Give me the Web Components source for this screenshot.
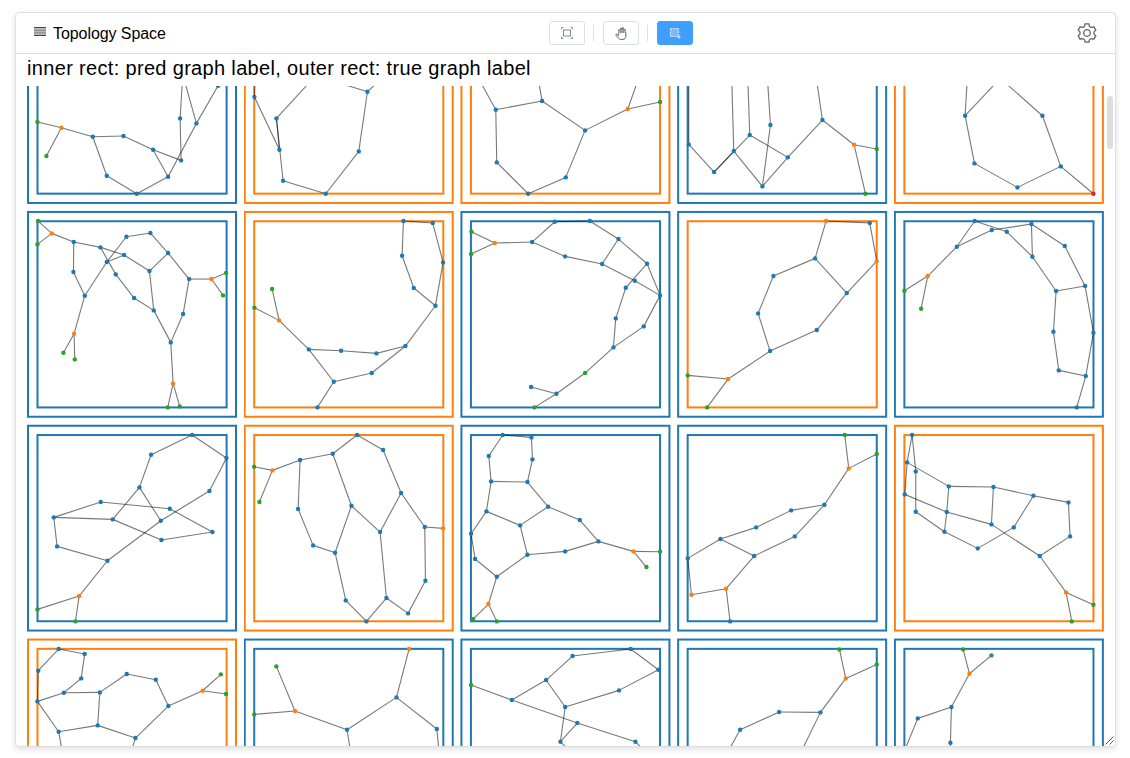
<!DOCTYPE html>
<html lang="en">
<head>
<meta charset="utf-8">
<title>Topology Space</title>
<style>
html,body{margin:0;height:100%;background:#fff;overflow:hidden}
body{font-family:"Liberation Sans",Arial,sans-serif;color:#000}
</style>
</head>
<body>
<topology-panel>
  <span slot="title">Topology Space</span>
  <tool-bar slot="tools"></tool-bar>
  <gear-icon slot="settings"></gear-icon>
  <span slot="caption">inner rect: pred graph label, outer rect: true graph label</span>
  <graph-grid></graph-grid>
</topology-panel>
<script>
const BLUE = '#1f77b4', ORANGE = '#ff7f0e', GREEN = '#2ca02c', RED = '#d62728';
const COLORS = { b: BLUE, o: ORANGE, g: GREEN, r: RED };

// Each graph: true label, predicted label, origin, unit scale, nodes, edges.
// A node is "x,y" with an optional colour letter; "x" marks an unpainted one.
const T = 1 / 3, U = [680 / 1568, 1 / 3];
const GRAPHS = [
 ['b','b',[14,84],[T,T],'70,114g 142,131o 97,216g 236,158 328,156 417,197 501,229 278,275 368,329 462,278 498,103 547,118 612,5 506,-28x','0-1 1-2 1-3 3-4 4-5 5-6 5-9 3-7 7-8 8-9 6-10 10-13 13-11 9-11 11-12'],
 ['o','o',[14,84],[T,T],'721,39 787,103 796,197 807,290 935,329 1034,202 1060,23 723,-40x 920,-42x 960,-8x 1100,-14x','0-7 0-2 1-2 1-3 1-8 3-4 4-5 5-6 6-9 6-10'],
 ['o','o',[454,84],[T,T],'125,77 264,51 393,139 521,75o 618,54g 335,280 222,329 128,235 60,-41x 250,-30x 560,-35x','0-1 1-2 2-3 3-4 2-5 5-6 6-7 7-0 0-8 1-9 3-10'],
 ['b','b',[454,84],[T,T],'704,181 780,264 839,201 887,153 949,123 925,307 1001,220 1105,108 1200,182o 1268,195g 1234,329g 704,-50x 832,-50x 880,-50x 938,-50x 1082,-50x','0-11 0-1 1-2 1-3 2-5 2-12 3-13 3-6 4-5 4-14 5-6 6-7 7-15 7-8 8-9 8-10'],
 ['o','o',[784,84],[T,T],'543,95 571,238 700,310 830,247 775,95 928,329r 551,-40x 670,-40x 620,-42x','0-6 0-7 4-8 0-1 1-2 2-3 3-4 3-5'],
 ['b','b',[20,205],[T,T],'54,48g 95,85o 52,118g 161,111 160,201 194,272 162,386o 130,443g 164,463g 241,127 312,150 260,171 287,208 342,279 401,316 388,198 319,95 391,84 444,144 507,222 574,222o 618,204g 609,271g 489,327 452,412 459,535o 443,607g 479,604g','0-1 1-2 1-3 3-4 4-5 5-6 6-7 6-8 3-9 9-10 10-11 5-11 11-16 9-12 12-13 13-14 14-15 10-15 15-18 16-17 17-18 18-19 19-20 20-21 20-22 19-23 23-24 14-24 24-25 25-26 25-27'],
 ['o','o',[20,205],[T,T],'703,308g 777,346o 756,252g 866,433 963,437 1069,445 1156,423 1055,504 941,530 892,607 1246,302 1181,249 1146,152 1150,48 1238,54 1269,172','0-1 1-2 1-3 3-4 4-5 5-6 6-7 7-8 3-8 8-9 6-10 10-11 11-12 12-13 13-14 14-15 15-10'],
 ['b','b',[454,205],[T,T],'52,80g 122,114o 51,147g 234,111 302,50 407,48 493,102 444,177 333,154 579,176 542,227 515,248 618,271 485,340 569,364 478,427 393,504g 307,566 231,546 241,607g','0-1 1-2 1-3 3-4 4-5 5-6 6-7 7-8 8-3 6-9 9-11 9-12 7-10 10-12 11-13 13-15 12-14 14-15 15-16 16-17 17-18 17-19'],
 ['b','o',[674,205],[T,T],'41,511g 162,522o 99,607g 288,438 252,325 298,213 423,160 456,48o 587,54 608,168o 518,264 428,375','0-1 1-2 1-3 3-4 4-5 5-6 6-7 7-8 8-9 9-10 6-10 10-11 11-3'],
 ['b','b',[674,205],[T,T],'691,257g 761,213o 741,311g 848,125 902,48 998,80 953,75 1072,57 1075,155 1172,123 1233,243 1146,258 1138,380 1154,496 1235,513 1258,383 1208,607','0-1 1-2 1-3 3-4 4-5 3-6 6-7 5-8 7-8 7-9 9-10 10-11 8-11 11-12 12-13 13-14 14-15 15-10 14-16'],
 ['b','b',[20,420],[T,T],'516,45 393,104 358,202 619,114 568,213 422,302 278,298 242,246 101,292 449,266 577,336 424,360 111,379 262,422 177,528o 52,568g 166,604g','0-1 1-2 0-3 3-4 4-5 2-5 2-6 6-8 7-8 7-9 9-10 10-11 11-6 8-12 12-13 5-13 13-14 14-15 14-16'],
 ['o','o',[20,420],[T,T],'702,140g 757,151o 718,246g 840,120 938,101 1011,45 1089,90 1143,219 1080,336 994,257 834,267 879,376 945,398 977,541 1039,604 1099,534 1164,580 1216,482 1214,321 1269,325o','0-1 1-2 1-3 3-4 4-5 5-6 6-7 7-8 8-9 4-9 3-10 10-11 11-12 9-12 12-13 13-14 14-15 8-15 15-16 16-17 17-18 7-18 18-19'],
 ['b','b',[454,420],[T,T],'146,45 232,52 104,108 235,118 111,184 220,186 97,274 198,316 282,260 377,300 433,364 333,394 220,404 51,341 63,417 128,470 103,552o 57,597g 128,604g 538,394o 618,395g 577,441g','0-1 0-2 1-3 2-4 4-5 3-5 4-6 6-7 7-8 5-8 8-9 9-10 10-11 11-12 7-12 6-13 13-14 14-15 12-15 15-16 16-17 16-18 10-19 19-20 19-21'],
 ['b','b',[674,420],[T,T],'512,45g 524,145o 608,102g 451,254 351,271 246,322 139,357 240,408 362,349 41,415 52,524o 156,506o 168,604','0-1 1-2 1-3 3-4 4-5 5-6 6-7 7-8 8-3 6-9 9-10 10-11 11-7 11-12'],
 ['o','o',[674,420],[T,T],'714,45 699,127 725,154 692,223 725,275 824,199 818,276 811,335 911,385 958,201 952,313 1019,322 1078,227 1183,247 1188,349 1097,408 1176,517o 1258,554g 1193,604g','0-1 0-2 1-3 2-4 1-5 3-6 4-7 5-6 6-7 7-8 5-9 9-10 6-10 8-11 11-12 9-12 12-13 13-14 14-15 10-15 15-16 16-17 16-18'],
 ['o','o',[0,630],U,'135,57 195,72 88,122 187,145 147,188 86,214 230,187 292,132 359,149 388,228 467,182o 509,133g 521,192g 312,324 225,286 135,305 147,390x 296,390x','0-1 0-2 1-3 3-4 2-5 4-5 4-6 6-7 7-8 8-9 9-10 10-11 10-12 9-13 13-14 14-6 14-15 15-5 15-16 13-17'],
 ['b','b',[0,630],U,'637,109g 680,243o 586,253g 800,299 914,202 943,57o 1007,297 811,390x 1014,390x','0-1 1-2 1-3 3-4 4-5 4-6 3-7 6-8'],
 ['b','b',[0,630],U,'1086,165g 1180,210 1259,150 1320,78 1454,57 1518,119 1427,181 1303,231 1331,279 1292,335 1465,335 1334,390x 1507,390x','0-1 1-2 2-3 3-4 4-5 5-6 6-7 2-7 1-8 8-10 8-9 7-9 9-11 10-12'],
 ['b','b',[674,420],[T,T],'496,688g 515,775o 608,733g 439,877 315,876 198,929 150,1016x 372,1014x','0-1 1-2 1-3 3-4 4-5 5-6 3-7'],
 ['b','b',[674,420],[T,T],'867,688g 886,761o 952,706g 832,861 731,895 829,968 683,1012x 829,1020x','0-1 1-2 1-3 3-4 3-5 4-6 5-7']
];

const define = (name, html, setup) => {
  const tpl = document.createElement('template');
  tpl.innerHTML = html;
  customElements.define(name, class extends HTMLElement {
    constructor() {
      super();
      this.attachShadow({ mode: 'open' }).append(tpl.content.cloneNode(true));
    }
    connectedCallback() { if (setup) setup(this); }
  });
};

define('topology-panel', `
<style>
:host{display:block;padding:12px 14px 0 15px}
.card{box-sizing:border-box;height:735px;border:1px solid #dedfe1;border-radius:4px;background:#fff;
 box-shadow:0 2px 6px rgba(0,0,0,.13);display:flex;flex-direction:column;overflow:hidden}
header{height:40px;flex:none;border-bottom:1px solid #dcdee0;display:grid;grid-template-columns:533px 1fr auto;align-items:center;padding-right:18px}
.name{display:flex;align-items:center;padding:1px 0 0 18px;font-size:16px;line-height:20px;letter-spacing:-.07px}
.name svg{flex:none;margin:-5px 7px 0 0}
.caption{height:32px;flex:none;padding-left:11px;font-size:20px;letter-spacing:.33px;line-height:29px;white-space:nowrap}
.body{position:relative;flex:1;min-height:0;overflow:hidden;padding-left:11px}
.thumb{position:absolute;right:2px;top:10px;width:6px;height:53px;border-radius:3px;background:#dddee0}
.grip{position:absolute;right:1px;bottom:1px}
</style>
<section class="card">
 <header>
  <div class="name"><svg width="12" height="9" viewBox="0 0 12 9"><path fill="#bbb" d="M0 1h12v7H0z"/><path stroke="#444" d="M0 .5h12M0 8.5h12"/><path stroke="#777" stroke-width=".8" d="M0 3.3h12M0 5.9h12"/></svg><slot name="title"></slot></div>
  <slot name="tools"></slot>
  <slot name="settings"></slot>
 </header>
 <div class="caption"><slot name="caption"></slot></div>
 <div class="body"><slot></slot><div class="thumb"></div>
  <svg class="grip" width="9" height="9" viewBox="0 0 9 9"><path d="M.5 8.5l8-8M4.5 8.5l4-4" stroke="#555" stroke-width="1" fill="none"/></svg>
 </div>
</section>`);

define('tool-button', `
<style>
:host{box-sizing:border-box;width:36px;height:24px;border:1px solid #dcdfe6;border-radius:3px;background:#fff;color:#606266;display:flex;align-items:center;justify-content:center}
:host([active]){background:#409eff;border-color:#409eff;color:#fff}
</style><slot></slot>`);

define('tool-bar', `
<style>
:host{display:flex;align-items:center}
i{width:1px;height:16px;background:#dcdfe6;margin:0 9px 0 8px}
svg{display:block}
</style>
<tool-button><svg width="12" height="12" viewBox="0 0 12 12" fill="none" stroke="#85878b"><path d="M2.5 3h7v6h-7z" stroke-width="1.1"/><path d="M.5 2.3V.5h1.8M9.7.5h1.8v1.8M11.5 9.7v1.8H9.7M2.3 11.5H.5V9.7"/></svg></tool-button>
<i></i>
<tool-button><svg width="12" height="13" viewBox="0 0 12 13"><path d="M4.3 8V3.2M6 6.5V1.8M7.9 6.5V1.4M9.7 7V3" stroke="currentColor" stroke-width="2.1" stroke-linecap="round" fill="none"/><path d="M3.6 8.8 1.9 7.3c-.7-.5-1.4.2-.9.9l2.7 3.3c.5.7 1 .9 1.8.9h2.4c1.8 0 2.9-1.2 2.9-3V5.5L4 6z" fill="#fff" stroke="currentColor" stroke-linejoin="round"/><path d="M4.3 8V3.2M6 7V1.9M7.9 7V1.6M9.7 7V3.1" stroke="#fff" stroke-width=".7"/><path d="M4.4 6.4h5.5v4.1H4.8z" fill="#fff"/></svg></tool-button>
<i></i>
<tool-button active><svg width="12" height="12" viewBox="0 0 12 12"><path d="M1.5 1.5h8v8h-8z" fill="#79bbff" stroke="#d9ecff" stroke-width="1.2" stroke-dasharray="1.7 1"/><path d="M8.6 10.2h3M10.1 8.7v3" stroke="#d9ecff"/></svg></tool-button>`);

define('gear-icon', `
<style>:host{display:block;width:20px;height:20px}svg{display:block}</style>
<svg width="20" height="20" viewBox="-10 -10 20 20" fill="none" stroke="#606266" stroke-width="1.3" stroke-linejoin="round"><path id="rim"/><circle r="3.3"/></svg>`, host => {
  // Six rounded teeth, each a sixth of a turn from the last.
  let d = '';
  const at = (r, deg) => {
    const t = deg * Math.PI / 180;
    return (r * Math.sin(t)).toFixed(2) + ' ' + (-r * Math.cos(t)).toFixed(2);
  };
  for (let a = 0; a < 360; a += 60) {
    d += (a ? 'L' : 'M') + at(9.3, a - 12) + 'L' + at(9.3, a + 12) +
      'L' + at(7.5, a + 18) + 'Q' + at(6.4, a + 30) + ' ' + at(7.5, a + 42);
  }
  host.shadowRoot.querySelector('#rim').setAttribute('d', d + 'Z');
});

define('graph-tile', `
<style>
:host{display:block;min-width:0;min-height:0}
svg{display:block;width:100%;height:100%}
rect{fill:none;stroke-width:2}
path{fill:none;stroke:#000;stroke-opacity:.53;stroke-width:1.1}
</style><svg></svg>`);

// Tiles share one plane; each svg is a window onto its own whole-pixel part of it.
const COLS = [27, 244, 460, 677, 894, 1105], ROWS = [86, 210, 424, 638, 746];
define('graph-grid', `
<style>
:host{display:grid;grid-template-columns:217px 216px 217px 217px 211px;grid-template-rows:124px 214px 214px 108px}
</style>`, host => {
  GRAPHS.forEach(([truth, pred, o, k, nodes, edges], n) => {
    const c = n % 5, r = Math.floor(n / 5);
    const tile = document.createElement('graph-tile');
    const svg = tile.shadowRoot.querySelector('svg');
    svg.setAttribute('viewBox', [COLS[c], ROWS[r], COLS[c + 1] - COLS[c], ROWS[r + 1] - ROWS[r]].join(' '));
    const x = 28 + 216.72 * c, y = 211.95 + 213.8 * (r - 1);
    const pts = nodes.split(' ').map(s => {
      const m = s.match(/^(-?\d+),(-?\d+)(\w?)$/);
      return [o[0] + m[1] * k[0] + .1, o[1] + m[2] * k[1] + .05, m[3] || 'b'];
    });
    const f = v => v.toFixed(2);
    svg.innerHTML =
      `<rect x="${x}" y="${y}" width="208" height="204.8" stroke="${COLORS[truth]}"/>` +
      `<rect x="${x + 9.5}" y="${y + 9.3}" width="189.1" height="186.2" stroke="${COLORS[pred]}"/>` +
      edges.split(' ').map(e => {
        const [a, b] = e.split('-').map(i => pts[i]);
        return `<path d="M${f(a[0])} ${f(a[1])}L${f(b[0])} ${f(b[1])}"/>`;
      }).join('') +
      pts.filter(p => p[2] !== 'x').map(p => `<circle cx="${f(p[0])}" cy="${f(p[1])}" r="2.2" fill="${COLORS[p[2]]}"/>`).join('');
    host.shadowRoot.append(tile);
  });
});
</script>
</body>
</html>
